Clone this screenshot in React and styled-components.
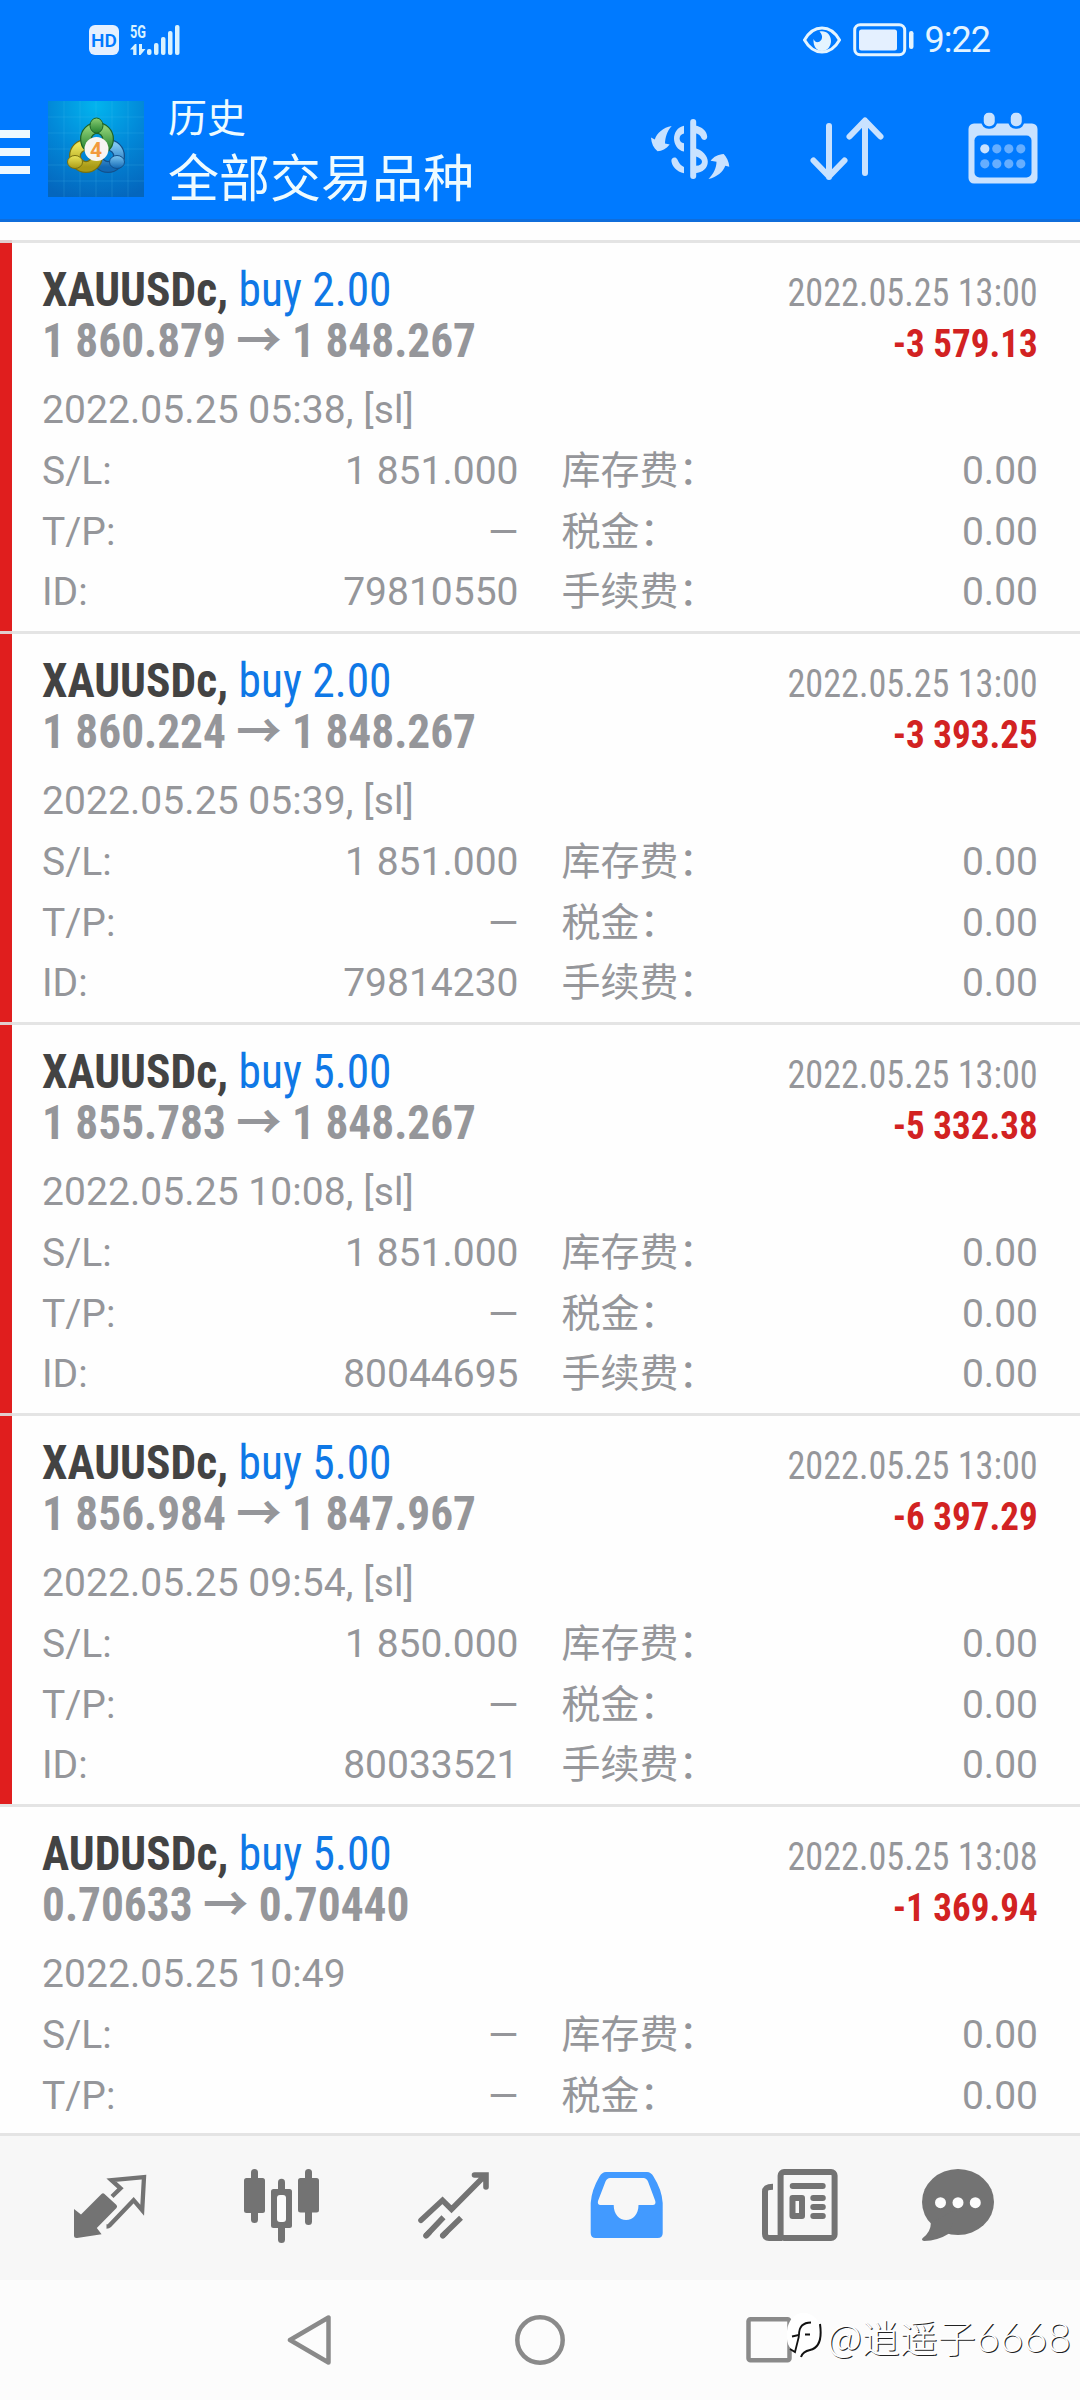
import React from 'react'
import styled, { createGlobalStyle } from 'styled-components'

const GlobalStyle = createGlobalStyle`
  * { box-sizing: border-box; }
  body {
    margin: 0;
    background: #fefefe;
    font-family: Roboto, "Noto Sans CJK SC", sans-serif;
  }
  svg { display: block; flex: none; }
`

const Screen = styled.div`
  position: relative;
  display: flex;
  flex-direction: column;
  width: 1080px;
  height: 2400px;
  overflow: hidden;
  background: #fefefe;
`

const Header = styled.header`
  display: flex;
  flex-direction: column;
  height: 222px;
  flex: none;
  background: #007aff;
  border-bottom: 3px solid #0f6ddb;
`

const StatusBar = styled.div`
  display: flex;
  align-items: center;
  height: 80px;
  padding: 0 90px 0 89px;
`

const StatusSide = styled.div`
  display: flex;
  align-items: center;
  gap: ${(p) => p.$gap}px;
`

const HdBadge = styled.span`
  width: 30px;
  height: 30px;
  border-radius: 6px;
  background: #e4f0ff;
  color: #007aff;
  font-size: 19px;
  font-weight: 600;
  line-height: 31px;
  text-align: center;
`

const Spacer = styled.div`
  flex: 1;
`

const Clock = styled.span`
  margin-left: 11px;
  color: #e4f4ff;
  font-size: 36px;
  line-height: 42px;
  letter-spacing: -1px;
`

const Toolbar = styled.div`
  display: flex;
  align-items: center;
  height: 140px;
  padding-right: 42px;
`

const MenuButton = styled.div`
  display: flex;
  flex-direction: column;
  gap: 10px;
  width: 30px;
  margin: 6px 18px 0 0;
`

const MenuLine = styled.span`
  height: 8px;
  background: #eef9ff;
`

const Titles = styled.div`
  display: flex;
  flex-direction: column;
  margin-left: 24px;
  padding-top: 11px;
  color: #eefbff;
`

const Caption = styled.span`
  font-size: 39px;
  line-height: 50px;
`

const Title = styled.span`
  font-size: 51px;
  line-height: 71px;
`

const Actions = styled.div`
  display: flex;
  align-items: center;
  gap: 80px;
`

const DealList = styled.main`
  flex: 1;
  min-height: 0;
  margin-top: 18px;
  overflow: hidden;
`

const Deal = styled.article`
  height: 391px;
  padding: 21px 42px 0;
  border-top: 3px solid rgba(225, 225, 225, 0.9);
  background: linear-gradient(to right, ${(p) => (p.$loss ? '#e01e1e' : 'transparent')} 12px, transparent 12px);
`

const Line = styled.div`
  display: flex;
  justify-content: space-between;
  align-items: baseline;
  height: 51px;
  line-height: 51px;
  font-stretch: 75%;
`

// the condensed face is still a touch wide, so each run is squeezed a little more
const Heading = styled.span`
  color: #0f78e6;
  font-size: 48px;
  transform: scaleX(0.946);
  transform-origin: left;
`

const Symbol = styled.span`
  color: #434343;
  font-weight: 700;
`

const Price = styled.span`
  color: #95969a;
  font-size: 48px;
  font-weight: 700;
  transform: scaleX(0.944);
  transform-origin: left;
`

const CloseTime = styled.span`
  color: #95969a;
  font-size: 39px;
  transform: scaleX(0.928);
  transform-origin: right;
`

const Profit = styled.span`
  color: #d22222;
  font-size: 39px;
  font-weight: 700;
  transform: scaleX(0.95);
  transform-origin: right;
`

const Comment = styled.div`
  margin-top: 14px;
  color: #95969a;
  font-size: 39px;
  line-height: 61px;
  letter-spacing: 0.070px;
`

const Details = styled.div`
  display: grid;
  grid-template-columns: 476.500px 476.500px;
  column-gap: 43px;
  color: #95969a;
  font-size: 39px;
  line-height: 60.500px;
`

const Field = styled.div`
  display: flex;
  justify-content: space-between;
`

const TabBar = styled.nav`
  display: flex;
  align-items: center;
  flex: none;
  height: 147px;
  padding: 0 24px;
  border-top: 3px solid #e4e4e4;
  background: #f7f7f7;
`

const Tab = styled.div`
  display: flex;
  justify-content: center;
  width: 172px;
  color: ${(p) => (p.$active ? '#429aff' : '#737373')};
`

const SystemBar = styled.div`
  display: flex;
  align-items: center;
  justify-content: center;
  gap: 180px;
  flex: none;
  height: 120px;
  background: #fcfcfc;
`

const Watermark = styled.div`
  position: absolute;
  right: 9px;
  bottom: 37px;
  display: flex;
  align-items: center;
  gap: 5px;
  color: #fff;
  font-family: "Noto Sans CJK SC", sans-serif;
  font-weight: 300;
  font-size: 38px;
  line-height: 52px;
  text-shadow: 1px 1px 0 #222;
`

const Digits = styled.span`
  font-family: Lato, sans-serif;
  font-size: 41px;
`

const Signal = () => (
  <svg width="50" height="42" viewBox="0 -6 50 42" fill="#d8f2ff">
    <text x="0" y="13" fontSize="18" fontWeight="700" textLength="16" lengthAdjust="spacingAndGlyphs">5G</text>
    <path d="M0 24.500l5-5.500h1.500v11h-3.300v-5.500zM9 19h3v5h3.500l-5 6H9z" />
    <rect x="17" y="24" width="4.500" height="6" rx="2" />
    <rect x="24" y="18" width="4.500" height="12" rx="2" />
    <rect x="31" y="12" width="4.500" height="18" rx="2" />
    <rect x="38" y="6" width="4.500" height="24" rx="2" />
    <rect x="45" y="0" width="4.500" height="30" rx="2" />
  </svg>
)

const Eye = () => (
  <svg width="38" height="28" viewBox="0 0 38 28">
    <path d="M1.500 14C6 6 12 2 19 2s13 4 17.500 12C32 22 26 26 19 26S6 22 1.500 14z" fill="none" stroke="#e4f4ff" strokeWidth="3" />
    <path d="M16.500 5.500C23 4 28 8.500 28 15c0 5-3.500 10-9 10-5 0-9-4-8.500-12 1.500 3 3 3.500 5 3 3.500-1 5.500-6 1-10.500z" fill="#e4f4ff" />
  </svg>
)

const Battery = () => (
  <svg width="61" height="34" viewBox="0 0 61 34">
    <rect x="1.700" y="1.700" width="50" height="30" rx="5.500" fill="none" stroke="#e4f4ff" strokeWidth="3" />
    <rect x="6" y="6.500" width="38" height="21" rx="2.500" fill="#e4f0ff" />
    <rect x="56" y="8" width="4.500" height="18" rx="2.200" fill="#e4f4ff" />
  </svg>
)

const AppLogo = () => (
  <svg width="96" height="96" viewBox="0 0 96 96">
    <defs>
      <radialGradient id="sky" cx="50%" cy="5%" r="100%">
        <stop offset="0" stopColor="#02b4ee" />
        <stop offset="0.500" stopColor="#0288d8" />
        <stop offset="1" stopColor="#0466bd" />
      </radialGradient>
      <linearGradient id="green" x1="0" y1="0" x2="0" y2="1">
        <stop offset="0" stopColor="#8ccf74" />
        <stop offset="1" stopColor="#23812f" />
      </linearGradient>
      <linearGradient id="yellow" x1="0" y1="0" x2="0" y2="1">
        <stop offset="0" stopColor="#ece65a" />
        <stop offset="1" stopColor="#a99a16" />
      </linearGradient>
      <linearGradient id="blue" x1="0" y1="0" x2="0" y2="1">
        <stop offset="0" stopColor="#7cc6f2" />
        <stop offset="1" stopColor="#1268b4" />
      </linearGradient>
    </defs>
    <rect width="96" height="96" fill="url(#sky)" />
    <path d="M16 0v96M32 0v96M48 0v96M64 0v96M80 0v96M0 16h96M0 32h96M0 48h96M0 64h96M0 80h96" stroke="#5cc6f4" strokeOpacity="0.180" />
    <circle cx="60" cy="55" r="11" fill="none" stroke="#12508c" strokeWidth="12" />
    <circle cx="60" cy="55" r="11" fill="none" stroke="url(#blue)" strokeWidth="9.500" />
    <circle cx="38" cy="55" r="11" fill="none" stroke="#77700f" strokeWidth="12" />
    <circle cx="38" cy="55" r="11" fill="none" stroke="url(#yellow)" strokeWidth="9.500" />
    <circle cx="49" cy="38" r="11" fill="none" stroke="#1d6428" strokeWidth="12" />
    <circle cx="49" cy="38" r="11" fill="none" stroke="url(#green)" strokeWidth="9.500" />
    <ellipse cx="48.500" cy="24.500" rx="6.500" ry="7.500" fill="url(#green)" stroke="#1d6428" />
    <ellipse cx="27" cy="61" rx="7.500" ry="6.500" fill="url(#yellow)" stroke="#77700f" />
    <ellipse cx="69" cy="61" rx="7.500" ry="6.500" fill="url(#blue)" stroke="#12508c" />
    <circle cx="48.500" cy="48" r="12" fill="#f7f5f2" />
    <text x="48" y="55.500" fontSize="21" fontWeight="700" fill="#f29a3c" textAnchor="middle">4</text>
  </svg>
)

const CurrencyIcon = () => (
  <svg width="80" height="62" viewBox="0 0 80 62" fill="#c9e2ff">
    <rect x="40.200" y="1" width="6" height="60" rx="3" />
    <path d="M34 7.700C27.500 8.800 24 15 24 20.500S27.500 32.500 34 33.600v-8.300c-2.800-.500-4.400-2.300-4.400-4.800s1.600-4.500 4.400-5z" />
    <path d="M21.400 43c-.300-3.800 4.500-5 6-1.500 1.500 3.800 3.600 6.300 6.600 7.500v6.300C26.500 53.500 22 48.500 21.400 43z" />
    <path d="M45 7.500C52 8.500 57 13.500 57.200 18.500c.200 4-4.500 4.600-5.800 1.500-1.200-2.700-3-4.400-6.400-4.700z" />
    <path fillRule="evenodd" d="M45 30C52 32 57.800 37.500 57.800 43.700 57.800 50 53 54.300 45 55.200zM46 38.500v9.300c4-.300 6-1.800 6-4.100 0-2.200-2.500-4.200-6-5.200z" />
    <path d="M21.700 8C17 13 15.200 19.500 15 25.500l4.700 1C16 31 12 33 7.500 33.200 3.500 30 1.500 25.500 1 19.500l3.800 2C7 15 13 9.500 21.700 8z" />
    <path d="M58.500 61C63.500 56 66.500 49.500 66.500 43.700l-5.900-1C64 38.500 68 36.500 73.700 36 76.500 39 79 43.500 79.300 48.700l-4-1C73 54 67 59 58.500 61z" />
  </svg>
)

const SortIcon = () => (
  <svg width="78" height="66" viewBox="0 0 78 66" fill="none" stroke="#c9e2ff" strokeWidth="6" strokeLinecap="round" strokeLinejoin="round">
    <path d="M19 10v51M3.500 44.500L19 60.500l15.500-16" />
    <path d="M55 57V5M39.500 20.500L55 4.500l15.500 16" />
  </svg>
)

const CalendarIcon = () => (
  <svg width="70" height="74" viewBox="0 0 70 74">
    <rect x="0.500" y="11.500" width="69" height="60" rx="5.500" fill="#c9e2ff" />
    <rect x="6.500" y="23.500" width="57" height="42" rx="5" fill="#007aff" />
    {[15.5, 42.5].map((x) => (
      <rect key={x} x={x - 1} y="-0.500" width="13.500" height="16" rx="6" fill="#c9e2ff" stroke="#007aff" strokeWidth="2.500" />
    ))}
    {[36.8, 51.8].map((y, row) =>
      [16.800, 28.800, 40.800, 52.800].map((x, col) => (
        <circle key={x} cx={x} cy={y} r="4.600" fill={row + col === 0 ? '#c9e2ff' : '#66aeff'} />
      ))
    )}
  </svg>
)

const QuotesIcon = () => (
  <svg width="100" height="80" viewBox="0 0 100 80">
    <path fill="currentColor" d="M14 41l7 5.500L41.500 26q1.500-1.500 3 0L56.500 37q1.200 1.500 0 3L36.800 60l4.800 6.200L17 70q-3 .200-3-2.500z" />
    <path fill="none" stroke="currentColor" strokeWidth="4.300" d="M52 28.500l8.500-8.200L51.500 12.200 84 9.200l-1.800 33-8.600-10L49.500 57.500q-1 1-3 1" />
  </svg>
)

const ChartIcon = () => (
  <svg width="100" height="80" viewBox="0 0 100 80" fill="currentColor">
    <rect x="19" y="1" width="7" height="54" rx="3.500" />
    <rect x="12" y="10" width="21" height="35" rx="2.500" />
    <rect x="46" y="10.700" width="7" height="64.300" rx="3.500" />
    <rect x="39" y="21" width="21" height="39" rx="2.500" />
    <rect x="45" y="27" width="9" height="27" rx="3" fill="#fcfcfc" />
    <rect x="73" y="1" width="7" height="56" rx="3.500" />
    <rect x="66" y="10" width="21" height="34.500" rx="2.500" />
  </svg>
)

const TradeIcon = () => (
  <svg width="100" height="80" viewBox="0 0 100 80" fill="none" stroke="currentColor" strokeWidth="5.600">
    <path strokeLinecap="round" d="M17 52.300L38.500 32.300l9 9L81 7.500M70.500 7H82v12" />
    <path d="M21.500 68.200l18-19M38 68.200l19-18.500" />
    <path strokeLinecap="round" d="M22 67.700l3-3M38.800 67.700l3-3" />
  </svg>
)

const HistoryIcon = () => (
  <svg width="100" height="80" viewBox="0 0 100 80">
    <path
      fill="currentColor"
      fillRule="evenodd"
      d="M30 4h41q4 0 6.500 4.500Q86 22 86.700 35v30q0 5-5 5h-62q-5 0-5-5V35Q15.500 22 23.500 8.500 26 4 30 4zM34 10q-3 0-4.500 3.500L22 33q-.800 4 2.500 4h13.200c0 9 5.500 15 12.400 15s12.400-6 12.400-15h14.300q3.300 0 2.500-4L72 13.500Q70.500 10 67.500 10z"
    />
  </svg>
)

const NewsIcon = () => (
  <svg width="100" height="80" viewBox="0 0 100 80" fill="none" stroke="currentColor" strokeWidth="6">
    <rect x="32.600" y="4" width="54" height="66" rx="3.500" />
    <path d="M25 18.700c-5 0-8 1-8 5V66q0 4 4 4h13" />
    <path strokeLinecap="round" d="M44.700 18h30M65.300 30h9.500M65.300 39h9.500M65.300 48h9.500" />
    <rect x="44.500" y="30" width="9.500" height="18" strokeLinejoin="round" />
  </svg>
)

const ChatIcon = () => (
  <svg width="100" height="80" viewBox="0 0 100 80">
    <ellipse cx="38" cy="34" rx="36" ry="33" fill="currentColor" />
    <path fill="currentColor" d="M28.700 65.700Q18 72.500 4 73q-3-.800-1.500-2.800Q11 64 10.800 55.300L38 40z" />
    {[20.5, 38, 55.3].map((x) => (
      <circle key={x} cx={x} cy="34.700" r="5.500" fill="#fcfcfc" />
    ))}
  </svg>
)

const tabs = [
  { name: 'quotes', Icon: QuotesIcon },
  { name: 'chart', Icon: ChartIcon },
  { name: 'trade', Icon: TradeIcon },
  { name: 'history', Icon: HistoryIcon, active: true },
  { name: 'news', Icon: NewsIcon },
  { name: 'chat', Icon: ChatIcon },
]

const deals = [
  { symbol: 'XAUUSDc', side: 'buy 2.00', open: '1 860.879', close: '1 848.267', closed: '2022.05.25 13:00', profit: '-3 579.13', comment: '2022.05.25 05:38, [sl]', sl: '1 851.000', id: '79810550', loss: true },
  { symbol: 'XAUUSDc', side: 'buy 2.00', open: '1 860.224', close: '1 848.267', closed: '2022.05.25 13:00', profit: '-3 393.25', comment: '2022.05.25 05:39, [sl]', sl: '1 851.000', id: '79814230', loss: true },
  { symbol: 'XAUUSDc', side: 'buy 5.00', open: '1 855.783', close: '1 848.267', closed: '2022.05.25 13:00', profit: '-5 332.38', comment: '2022.05.25 10:08, [sl]', sl: '1 851.000', id: '80044695', loss: true },
  { symbol: 'XAUUSDc', side: 'buy 5.00', open: '1 856.984', close: '1 847.967', closed: '2022.05.25 13:00', profit: '-6 397.29', comment: '2022.05.25 09:54, [sl]', sl: '1 850.000', id: '80033521', loss: true },
  { symbol: 'AUDUSDc', side: 'buy 5.00', open: '0.70633', close: '0.70440', closed: '2022.05.25 13:08', profit: '-1 369.94', comment: '2022.05.25 10:49', sl: '—' },
]

const DealCard = ({ deal }) => (
  <Deal $loss={deal.loss}>
    <Line>
      <Heading>
        <Symbol>{deal.symbol}, </Symbol>
        {deal.side}
      </Heading>
      <CloseTime>{deal.closed}</CloseTime>
    </Line>
    <Line>
      <Price>{deal.open} → {deal.close}</Price>
      <Profit>{deal.profit}</Profit>
    </Line>
    <Comment>{deal.comment}</Comment>
    <Details>
      <Field><span>S/L:</span><span>{deal.sl}</span></Field>
      <Field><span>库存费：</span><span>0.00</span></Field>
      <Field><span>T/P:</span><span>—</span></Field>
      <Field><span>税金：</span><span>0.00</span></Field>
      {deal.id && (
        <>
          <Field><span>ID:</span><span>{deal.id}</span></Field>
          <Field><span>手续费：</span><span>0.00</span></Field>
        </>
      )}
    </Details>
  </Deal>
)

const App = () => (
  <Screen>
    <GlobalStyle />
    <Header>
      <StatusBar>
        <StatusSide $gap={11}>
          <HdBadge>HD</HdBadge>
          <Signal />
        </StatusSide>
        <Spacer />
        <StatusSide $gap={12}>
          <Eye />
          <Battery />
        </StatusSide>
        <Clock>9:22</Clock>
      </StatusBar>
      <Toolbar>
        <MenuButton>
          <MenuLine />
          <MenuLine />
          <MenuLine />
        </MenuButton>
        <AppLogo />
        <Titles>
          <Caption>历史</Caption>
          <Title>全部交易品种</Title>
        </Titles>
        <Spacer />
        <Actions>
          <CurrencyIcon />
          <SortIcon />
          <CalendarIcon />
        </Actions>
      </Toolbar>
    </Header>
    <DealList>
      {deals.map((deal, i) => (
        <DealCard key={i} deal={deal} />
      ))}
    </DealList>
    <TabBar>
      {tabs.map(({ name, Icon, active }) => (
        <Tab key={name} $active={active}>
          <Icon />
        </Tab>
      ))}
    </TabBar>
    <SystemBar>
      <svg width="50" height="50" viewBox="0 0 50 50" fill="none" stroke="#8a8a8a" strokeWidth="4.500" strokeLinejoin="round">
        <path d="M43.500 2.500v45L5 25z" />
      </svg>
      <svg width="50" height="50" viewBox="0 0 50 50" fill="none" stroke="#8a8a8a" strokeWidth="4.500">
        <circle cx="25" cy="25" r="22.700" />
      </svg>
      <svg width="50" height="50" viewBox="0 0 50 50" fill="none" stroke="#8a8a8a" strokeWidth="4.500">
        <rect x="3.500" y="4.200" width="41" height="41" rx="2" />
      </svg>
    </SystemBar>
    <Watermark>
      <svg width="37" height="48" viewBox="0 0 37 48">
        <path d="M18 0C29 0 36 8 36 20c0 12-6 19-17 22l-3 3-5-6C3 36 1 28 2 18 3 8 9 0 18 0z" fill="#fff" />
        <path d="M35 11c2 14-1 24-10 26-5 1-8 4-9 7" fill="none" stroke="#111" strokeWidth="2" />
        <path d="M7 23.500l7-1.500c0-8 4-12.500 12-12.500M20 21.500h5M5 36l5 3 4-16" fill="none" stroke="#111" strokeWidth="1.800" />
      </svg>
      <span>
        @逍遥子<Digits>6668</Digits>
      </span>
    </Watermark>
  </Screen>
)

export default App
